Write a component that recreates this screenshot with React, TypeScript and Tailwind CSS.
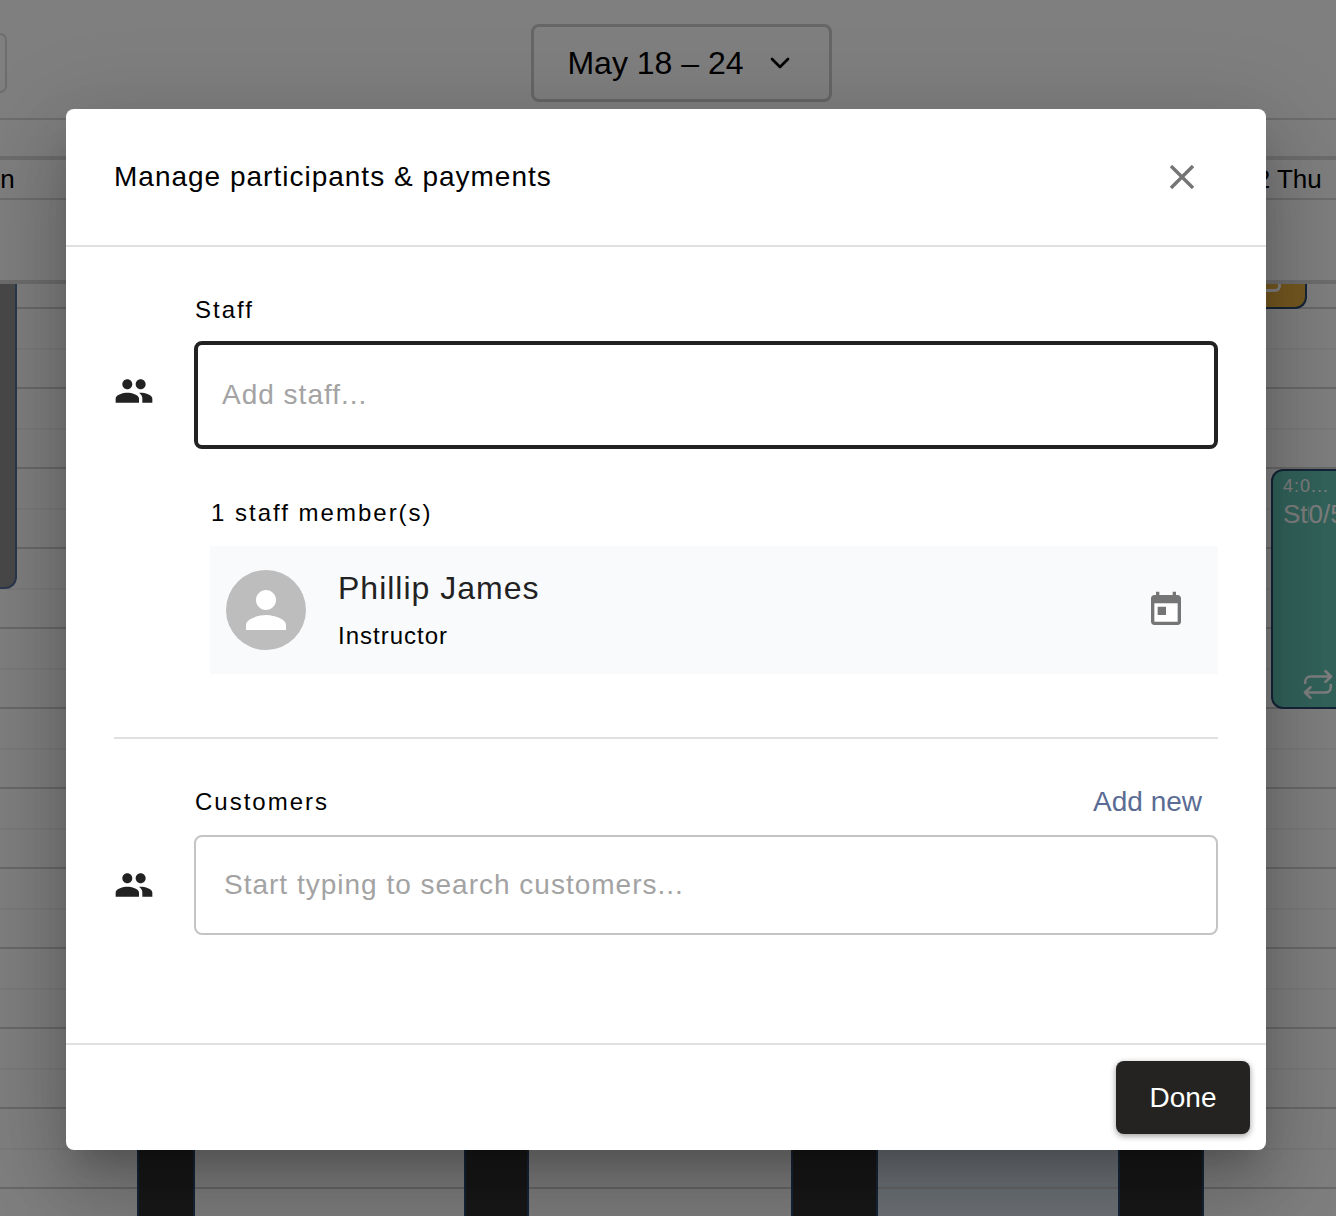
import React, { useState } from "react";
import { ChevronDown } from "lucide-react";
import { MdPeople, MdPerson } from "react-icons/md";

const days = [
  { id: "sun", label: "18 Sun" },
  { id: "mon", label: "" },
  { id: "tue", label: "" },
  { id: "wed", label: "" },
  { id: "thu", label: "22 Thu" },
];
const hours = Array.from({ length: 12 }, (_, i) => i);

const RepeatIcon: React.FC<{ className?: string }> = ({ className }) => (
  <svg
    viewBox="0 0 28 30"
    fill="none"
    stroke="currentColor"
    strokeWidth="2.4"
    strokeLinecap="round"
    strokeLinejoin="round"
    className={className}
  >
    <path d="M2 14v-1a5 5 0 0 1 5-5h19M21 3l5.300 5-5.300 5" />
    <path d="M26 16v2a5 5 0 0 1-5 5H2M7 18l-5.300 5 5.300 5" />
  </svg>
);

const CalendarIcon: React.FC<{ className?: string }> = ({ className }) => (
  <svg viewBox="0 0 24 24" className={className}>
    <path d="M5 8h14v11H5z" fill="#fff" />
    <path
      fill="currentColor"
      d="M19 3h-1V1h-2v2H8V1H6v2H5c-1.110 0-1.990.9-1.990 2L3 19c0 1.100.89 2 2 2h14c1.100 0 2-.9 2-2V5c0-1.100-.9-2-2-2zm0 16H5V8h14v11zM7 10h5v5H7z"
    />
  </svg>
);

const DayEvents: React.FC<{ day: string }> = ({ day }) => {
  switch (day) {
    case "sun":
      return <div className="absolute left-0 top-0 h-[305px] w-[207px] rounded-b-xl border-2 border-t-0 border-[#567099] bg-[#929292]" />;
    case "mon":
      return <div className="absolute bottom-0 left-0 top-[700px] w-[58px] border-x-2 border-[#2a4a70] bg-[#303030]" />;
    case "tue":
      return <div className="absolute bottom-0 left-0 top-[700px] w-[65px] border-x-2 border-[#2a4a70] bg-[#303030]" />;
    case "wed":
      return <div className="absolute bottom-0 left-0 top-[700px] w-[87px] border-x-2 border-[#2a4a70] bg-[#303030]" />;
    default:
      return (
        <>
          <div className="absolute left-0 top-0 h-[25px] w-[189px] overflow-hidden rounded-b-xl border-2 border-t-0 border-[#2a4a70] bg-[#e8b040]">
            <div className="ml-auto mr-6 h-2 w-6 rounded-br-md border-b-[3px] border-r-[3px] border-white" />
          </div>
          <div className="absolute left-[153px] top-[185px] flex h-[240px] w-[170px] flex-col rounded-xl border-2 border-[#2a4a70] bg-[#64c6b6] px-[10px] py-[3px] text-white">
            <span className="text-[18px] leading-6 tracking-[1px]">4:0...</span>
            <span className="text-[26px] leading-8">
              St<span className="inline-block border-l border-white/50 leading-4">0/5</span>
            </span>
            <RepeatIcon className="ml-5 mt-auto mb-1 h-8 w-[30px]" />
          </div>
          <div className="absolute bottom-0 left-0 top-[700px] w-[86px] border-x-2 border-[#2a4a70] bg-[#303030]" />
        </>
      );
  }
};

const Calendar: React.FC = () => (
  <div className="flex h-screen flex-col overflow-hidden bg-white">
    <header className="flex items-center border-b-2 border-[#dadada] pb-4 pt-6">
      <div className="h-[60px] w-[7px] rounded-r-lg border-2 border-l-0 border-[#dadada]" />
      <div className="flex flex-1 justify-center pl-5">
        <button className="flex h-[78px] items-center gap-5 rounded-lg border-[3px] border-[#cccccc] px-[33px] text-[32px] leading-10">
          May 18 – 24
          <ChevronDown className="size-8" />
        </button>
      </div>
    </header>
    <div className="h-9 shrink-0" />
    <div className="-ml-[190px] flex h-11 shrink-0 border-b-2 border-t-4 border-[#dadada]">
      {days.map((day) => (
        <div key={day.id} className="w-[327px] shrink-0 text-center text-[26px] leading-[38px]">
          {day.label}
        </div>
      ))}
    </div>
    <div className="h-[84px] shrink-0 border-b-4 border-[#dadada]" />
    <div className="-ml-[190px] flex min-h-0 flex-1">
      {days.map((day) => (
        <div
          key={day.id}
          className={`relative w-[327px] shrink-0 overflow-hidden ${day.id === "wed" ? "bg-[#dfe8f2]" : "bg-white"}`}
        >
          <div className="h-[25px] border-b-2 border-[#d2d2d2]" />
          {hours.map((hour) => (
            <div key={hour} className="h-20 border-b-2 border-[#d2d2d2]">
              <div className="h-[41px] border-b-2 border-[#f4f4f4]" />
            </div>
          ))}
          <DayEvents day={day.id} />
        </div>
      ))}
    </div>
  </div>
);

const ParticipantsDialog: React.FC = () => {
  const [staff, setStaff] = useState("");
  const [customer, setCustomer] = useState("");

  return (
    <div
      role="dialog"
      aria-labelledby="dialog-title"
      className="w-full rounded-lg bg-white text-black shadow-[0_22px_30px_-14px_rgba(0,0,0,0.2),0_48px_76px_6px_rgba(0,0,0,0.14),0_18px_92px_16px_rgba(0,0,0,0.12)]"
    >
      <div className="flex h-[138px] items-center justify-between border-b-2 border-[#e0e0e0] pl-12 pr-[52px]">
        <h2 id="dialog-title" className="text-[28px] leading-[42px] tracking-[1px]">
          Manage participants &amp; payments
        </h2>
        <button aria-label="Close" className="flex size-16 items-center justify-center text-[#757575]">
          <svg viewBox="0 0 24 24" stroke="currentColor" strokeWidth="3.4" className="size-6">
            <path d="M1 1l22 22M23 1L1 23" />
          </svg>
        </button>
      </div>

      <div className="px-12 pb-[108px] pt-[47px]">
        <div className="grid grid-cols-[80px_1fr]">
          <label htmlFor="staff" className="col-start-2 mb-[15px] pl-px text-2xl leading-8 tracking-[2px]">
            Staff
          </label>
          <div className="pt-[30px] text-[#222222]">
            <MdPeople className="size-10" />
          </div>
          <input
            id="staff"
            type="text"
            value={staff}
            onChange={(e) => setStaff(e.target.value)}
            placeholder="Add staff..."
            className="h-[108px] w-full rounded-lg border-4 border-[#222222] px-6 text-[28px] tracking-[1px] outline-none placeholder:text-[#a3a3a3]"
          />
          <div className="col-start-2 pl-4 pt-12">
            <p className="mb-[17px] pl-px text-2xl leading-8 tracking-[2px]">1 staff member(s)</p>
            <div className="flex items-center bg-[#f9fafc] py-[22px] pl-4 pr-8">
              <div className="flex size-20 items-center justify-center rounded-full bg-[#bdbdbd] text-white">
                <MdPerson className="size-[60px]" />
              </div>
              <div className="ml-8 flex-1">
                <p className="mb-3 text-[32px] leading-10 tracking-[1px] text-[#222222]">Phillip James</p>
                <p className="text-2xl leading-8 tracking-[1px]">Instructor</p>
              </div>
              <button aria-label="View schedule" className="text-[#757575]">
                <CalendarIcon className="size-10" />
              </button>
            </div>
          </div>
        </div>

        <div className="mt-[63px] grid grid-cols-[80px_1fr] border-t-2 border-[#e0e0e0] pt-[47px]">
          <div className="col-start-2 mb-[17px] flex items-center justify-between pl-px pr-4">
            <label htmlFor="customers" className="text-2xl leading-8 tracking-[2px]">
              Customers
            </label>
            <button className="text-[28px] leading-8 text-[#5a6c94]">Add new</button>
          </div>
          <div className="pt-[30px] text-[#222222]">
            <MdPeople className="size-10" />
          </div>
          <input
            id="customers"
            type="text"
            value={customer}
            onChange={(e) => setCustomer(e.target.value)}
            placeholder="Start typing to search customers..."
            className="h-[100px] w-full rounded-lg border-2 border-[#c4c4c4] px-7 text-[28px] tracking-[1px] outline-none placeholder:text-[#a3a3a3]"
          />
        </div>
      </div>

      <div className="flex justify-end border-t-2 border-[#e0e0e0] p-4">
        <button className="h-[73px] w-[134px] rounded-lg bg-[#242321] text-[28px] leading-10 text-white shadow-[0_2px_6px_rgba(0,0,0,0.4)]">
          Done
        </button>
      </div>
    </div>
  );
};

const App: React.FC = () => {
  return (
    <div className="relative font-['Liberation_Sans',Arial,sans-serif] text-black">
      <Calendar />
      <div className="absolute inset-0 flex items-start overflow-hidden bg-black/50 pl-[66px] pr-[70px] pt-[109px]">
        <ParticipantsDialog />
      </div>
    </div>
  );
};

export default App;
